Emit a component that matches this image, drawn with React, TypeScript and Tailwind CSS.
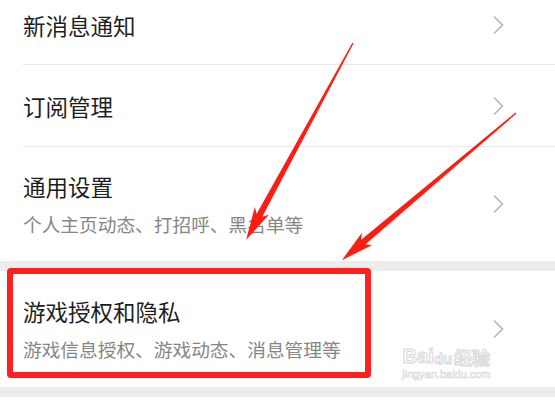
const Chevron = () => (
  <svg width="12" height="20" viewBox="0 0 12 20" className="shrink-0">
    <path d="M2 1.5 L10.5 10 L2 18.5" fill="none" stroke="#b5b5b5" strokeWidth="1.6" />
  </svg>
);

function Arrow({ x, y, angle, len }: { x: number; y: number; angle: number; len: number }) {
  const L = len;
  const pts = `0,-0.7 ${L - 28},-3.2 ${L - 33},-8 ${L},0 ${L - 33},8 ${L - 28},3.2 0,0.7`;
  return <polygon points={pts} fill="#ff1d12" transform={`translate(${x} ${y}) rotate(${angle})`} />;
}

export default function App() {
  return (
    <div
      className="relative w-[555px] h-[409px] overflow-hidden bg-white"
      style={{ fontFamily: '"Noto Sans CJK SC", "Noto Sans", sans-serif' }}
    >
      {/* first group */}
      <div className="pl-[23px]">
        <div className="flex h-[65px] items-center justify-between pr-[51px] pb-[15px] border-b border-[#e9e9e9]">
          <span className="text-[22.5px] leading-[30px] text-[#1e1e1e]">新消息通知</span>
          <Chevron />
        </div>
        <div className="flex h-[82px] items-center justify-between pr-[51px] border-b border-[#e9e9e9]">
          <span className="text-[22.5px] leading-[30px] text-[#1e1e1e]">订阅管理</span>
          <Chevron />
        </div>
        <div className="flex h-[114px] items-center justify-between pr-[51px]">
          <div className="flex flex-col gap-[10px]">
            <span className="text-[22.5px] leading-[30px] text-[#1e1e1e]">通用设置</span>
            <span className="text-[18.7px] leading-[26px] text-[#868686]">个人主页动态、打招呼、黑名单等</span>
          </div>
          <Chevron />
        </div>
      </div>

      <div className="h-[10px] bg-[#ededed]" />

      <div className="flex h-[116px] items-center justify-between pl-[23px] pr-[51px]">
        <div className="flex flex-col gap-[10px]">
          <span className="text-[22.5px] leading-[30px] text-[#1e1e1e]">游戏授权和隐私</span>
          <span className="text-[18.7px] leading-[26px] text-[#868686]">游戏信息授权、游戏动态、消息管理等</span>
        </div>
        <Chevron />
      </div>

      <div className="h-[10px] bg-[#ededed]" />

      {/* highlight box */}
      <div className="absolute left-[7px] top-[268px] w-[364px] h-[110px] rounded-[4px] border-[6px] border-[#ff1f1f]" />

      {/* arrows */}
      <svg className="absolute left-0 top-0" width="555" height="409">
        <Arrow x={353} y={43} angle={118.5} len={224} />
        <Arrow x={516} y={113} angle={139.8} len={228} />
      </svg>

      {/* watermark */}
      <div className="absolute left-[402px] top-[346px] flex flex-col items-center">
        <div className="flex items-end leading-none text-white [-webkit-text-stroke:1px_#d6d6d6]">
          <span className="text-[20px] font-bold" style={{ fontFamily: '"Liberation Sans", sans-serif' }}>Bai</span>
          <span className="text-[15px] font-bold" style={{ fontFamily: '"Liberation Sans", sans-serif' }}>du</span>
          <span className="ml-[2px] text-[18px] font-bold">经验</span>
        </div>
        <span
          className="mt-[3px] text-[11px] leading-none text-white [-webkit-text-stroke:0.6px_#d6d6d6]"
          style={{ fontFamily: '"Liberation Sans", sans-serif' }}
        >
          jingyan.baidu.com
        </span>
      </div>
    </div>
  );
}
